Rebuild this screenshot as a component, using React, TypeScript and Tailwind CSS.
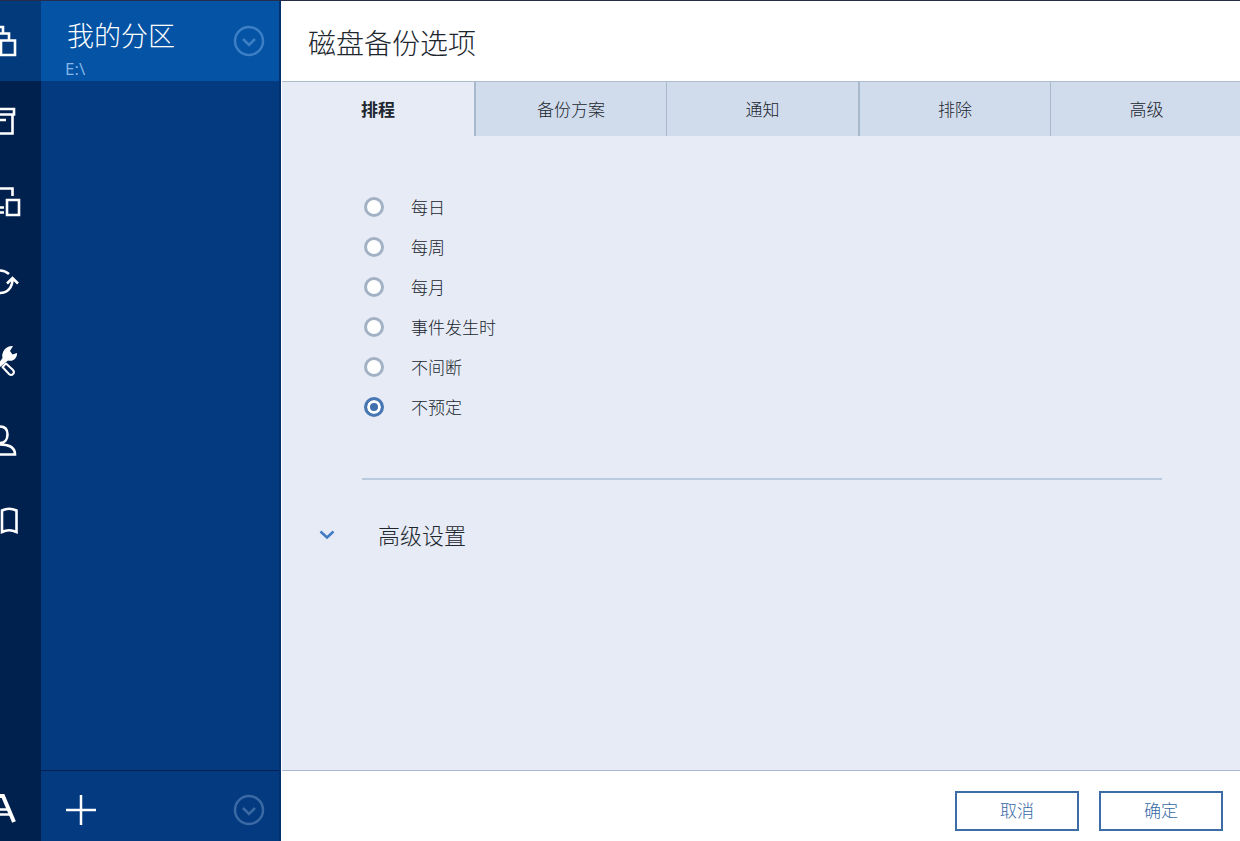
import { useState, type ReactNode } from 'react';

const NAV_ITEMS: { label: string; icon: ReactNode }[] = [
  {
    label: '备份',
    icon: <path d="M0 26H3V32M0 32.5H9V38.5M1 39.5H15V54H1Z" />,
  },
  {
    label: '存档',
    icon: <path d="M0 28H14V33.5H0M12.5 34V52.5H0M0 39H6" />,
  },
  {
    label: '同步',
    icon: <path d="M0 27.5H12.5V35M7 39H19V54H7ZM0 46.5H4M0 51.5H4" />,
  },
  {
    label: '恢复',
    icon: <path d="M0 29.5Q5 29.5 9 33M0 52C7 52 12.5 47 12.5 38M7 42.5L12.5 37L18 42.5" />,
  },
  {
    label: '工具',
    icon: (
      <>
        <path
          d="M13 25L10 30L12.5 33.5L17 32C17.5 37 13 41 8 39.5L0 46V40.5L2.5 37C1 31 6 24.5 13 25Z"
          fill="currentColor"
          stroke="none"
        />
        <path d="M2.5 46L6 42.5L13 49C15.5 52 12 55.5 9 53Z" strokeWidth="2" strokeLinejoin="round" />
      </>
    ),
  },
  {
    label: '帐户',
    icon: <path d="M0 25.5C5 25.5 7.5 28.5 7.5 33.5C7.5 38 5 42 0 42M0 43.5C8 43.5 15 46 15 53.5H0" />,
  },
  {
    label: '帮助',
    icon: <path d="M2 29.5Q9 26 16.5 29.5V51Q9 47.5 2 51Z" />,
  },
];

const TABS = ['排程', '备份方案', '通知', '排除', '高级'];

const SCHEDULES = ['每日', '每周', '每月', '事件发生时', '不间断', '不预定'];

function CircleChevron() {
  return (
    <svg width="32" height="32" viewBox="0 0 32 32" fill="none" stroke="currentColor" aria-hidden>
      <circle cx="16" cy="16" r="14" strokeWidth="2.5" />
      <path d="M10 14L16 20L22 14" strokeWidth="2.5" />
    </svg>
  );
}

function NavRail() {
  return (
    <nav className="flex w-[41px] shrink-0 flex-col bg-[#00204e] text-white">
      {NAV_ITEMS.map(({ label, icon }, index) => (
        <button key={label} type="button" aria-label={label} className={index === 0 ? 'bg-[#033a7c]' : ''}>
          <svg className="block" width="41" height="80" viewBox="0 0 41 80" fill="none" stroke="currentColor" strokeWidth="2.6">
            {icon}
          </svg>
        </button>
      ))}
      <svg className="mt-auto block" width="41" height="70" viewBox="0 0 41 70" fill="none" stroke="currentColor" aria-hidden>
        <path d="M0 25H3L14 51" strokeWidth="4" />
        <path d="M0 38.5H9M0 43.5H11" strokeWidth="2.5" />
      </svg>
    </nav>
  );
}

function BackupPanel() {
  return (
    <aside className="flex w-[240px] shrink-0 flex-col border-r-2 border-[#02306c] bg-[#033a80]">
      <div className="flex h-20 items-center justify-between bg-[#0553a4] pr-[14px] pl-6">
        <div className="pt-4">
          <h2 className="pl-[2px] text-[27px] leading-10 font-light text-white">我的分区</h2>
          <p className="font-['Open_Sans','Noto_Sans',sans-serif] text-[17px] leading-6 text-[#86b6ea]">E:\</p>
        </div>
        <button type="button" aria-label="备份操作" className="text-[#3c7fc4]">
          <CircleChevron />
        </button>
      </div>
      <div className="mt-auto flex h-[71px] items-center justify-between border-t border-[#01204f] pt-2 pr-[14px] pl-6">
        <button type="button" aria-label="添加备份" className="text-white">
          <svg width="32" height="32" viewBox="0 0 32 32" stroke="currentColor" strokeWidth="2.5">
            <path d="M1 16H31M16 1V31" />
          </svg>
        </button>
        <button type="button" aria-label="更多" className="text-[#3a69a3]">
          <CircleChevron />
        </button>
      </div>
    </aside>
  );
}

export default function App() {
  const [tab, setTab] = useState(0);
  const [schedule, setSchedule] = useState('不预定');

  return (
    <div className="flex min-h-screen border-t border-[#262c4c] bg-white font-['Liberation_Sans','Noto_Sans_CJK_SC',sans-serif] text-[#20262e]">
      <NavRail />
      <BackupPanel />
      <main className="flex min-w-0 flex-1 flex-col border-l border-white">
        <header className="flex h-[81px] shrink-0 items-center border-b border-[#abbdcc] px-[26px] pt-2">
          <h1 className="text-[28px] leading-10 font-light">磁盘备份选项</h1>
        </header>

        <div role="tablist" className="flex h-[54px] shrink-0 overflow-hidden bg-[#d0dcec]">
          {TABS.map((label, index) => (
            <button
              key={label}
              type="button"
              role="tab"
              aria-selected={tab === index}
              onClick={() => setTab(index)}
              className={`min-w-[192px] flex-1 border-[#a9b9cd] pt-1 text-[17px] ${
                index === 0 ? '' : index % 2 ? 'border-l-2' : 'border-l'
              } ${tab === index ? 'bg-[#e6ebf5] font-bold' : 'bg-[#d0dcec] font-light'}`}
            >
              {label}
            </button>
          ))}
        </div>

        <section className="flex-1 bg-[#e6ebf5] pt-[51px]">
          <div role="radiogroup" aria-label="排程" className="pl-[82px]">
            {SCHEDULES.map((label) => (
              <label key={label} className="flex h-10 w-fit items-center gap-[27px] text-[17px] font-light">
                <input
                  type="radio"
                  name="schedule"
                  checked={schedule === label}
                  onChange={() => setSchedule(label)}
                  className="size-5 appearance-none rounded-full border-3 border-[#a2b2c4] bg-white checked:border-[#4778b4] checked:bg-[#3f70ad] checked:shadow-[inset_0_0_0_3px_white]"
                />
                <span className="pt-[3px]">{label}</span>
              </label>
            ))}
          </div>
          <hr className="mt-[51px] mr-[78px] ml-20 border-t-2 border-[#bacade]" />
          <button type="button" aria-expanded={false} className="mt-9 ml-9 flex h-10 items-center gap-[42px] text-[22px] font-light">
            <svg width="18" height="18" viewBox="0 0 18 18" fill="none" stroke="#3f7cc4" strokeWidth="2.5" aria-hidden>
              <path d="M2.5 4.5L9 10.5L15.5 4.5" />
            </svg>
            高级设置
          </button>
        </section>

        <footer className="flex h-[71px] shrink-0 items-center justify-end gap-5 border-t border-[#aab8d0] pt-[10px] pr-[17px]">
          <button type="button" className="h-10 w-[124px] border-2 border-[#3c6ca6] pt-[2px] text-[17px] font-light text-[#3568a5]">
            取消
          </button>
          <button type="button" className="h-10 w-[124px] border-2 border-[#3c6ca6] pt-[2px] text-[17px] font-light text-[#3568a5]">
            确定
          </button>
        </footer>
      </main>
    </div>
  );
}
